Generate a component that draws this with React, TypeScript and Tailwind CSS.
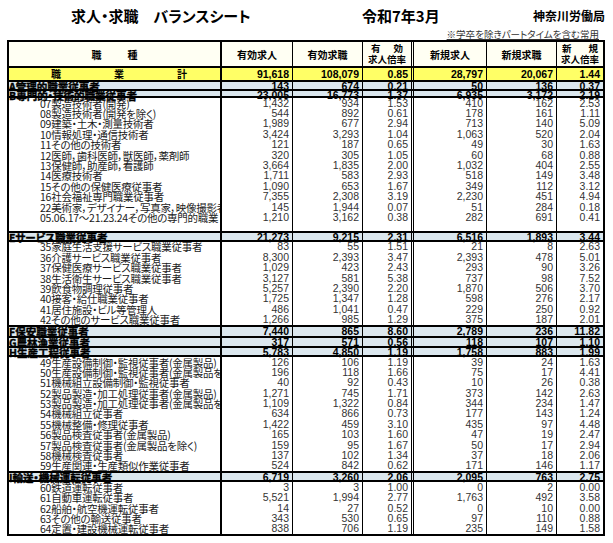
import React from 'react';

type Kind = 'sub' | 'cat' | 'gap';

interface Row {
  label: string;
  v: string[];
  kind: Kind;
  h?: string;
}

const COLS = 'grid grid-cols-[213px_71px_70px_51px_73px_70px_46px]';
const CELL = [
  'border-r-2 border-black',
  'border-r border-black',
  'border-r border-black',
  'border-r-[3px] border-double border-black',
  'border-r border-black',
  'border-r border-black',
  '',
];

const JP = "font-['Noto_Sans_CJK_JP',sans-serif] [font-feature-settings:'palt']";
const NUM = "font-['Liberation_Sans_Narrow','Liberation_Sans',sans-serif]";

const rows: Row[] = [
  { label: 'A管理的職業従事者', v: ['143', '674', '0.21', '50', '136', '0.37'], kind: 'cat', h: 'h-[9px]' },
  { label: 'B専門的・技術的職業従事者', v: ['23,005', '16,773', '1.37', '6,935', '3,172', '2.19'], kind: 'cat', h: 'h-[9px]' },
  { label: '07製造技術者(開発)', v: ['1,432', '934', '1.53', '410', '162', '2.53'], kind: 'sub' },
  { label: '08製造技術者(開発を除く)', v: ['544', '892', '0.61', '178', '161', '1.11'], kind: 'sub' },
  { label: '09建築・土木・測量技術者', v: ['1,989', '677', '2.94', '713', '140', '5.09'], kind: 'sub' },
  { label: '10情報処理・通信技術者', v: ['3,424', '3,293', '1.04', '1,063', '520', '2.04'], kind: 'sub' },
  { label: '11その他の技術者', v: ['121', '187', '0.65', '49', '30', '1.63'], kind: 'sub' },
  { label: '12医師，歯科医師，獣医師，薬剤師', v: ['320', '305', '1.05', '60', '68', '0.88'], kind: 'sub' },
  { label: '13保健師，助産師，看護師', v: ['3,664', '1,835', '2.00', '1,032', '404', '2.55'], kind: 'sub' },
  { label: '14医療技術者', v: ['1,711', '583', '2.93', '518', '149', '3.48'], kind: 'sub' },
  { label: '15その他の保健医療従事者', v: ['1,090', '653', '1.67', '349', '112', '3.12'], kind: 'sub' },
  { label: '16社会福祉専門職業従事者', v: ['7,355', '2,308', '3.19', '2,230', '451', '4.94'], kind: 'sub' },
  { label: '22美術家，デザイナー，写真家，映像撮影者', v: ['145', '1,944', '0.07', '51', '284', '0.18'], kind: 'sub' },
  { label: '05.06.17～21.23.24その他の専門的職業', v: ['1,210', '3,162', '0.38', '282', '691', '0.41'], kind: 'sub' },
  { label: '', v: ['', '', '', '', '', ''], kind: 'gap' },
  { label: 'Eサービス職業従事者', v: ['21,273', '9,215', '2.31', '6,516', '1,893', '3.44'], kind: 'cat', h: 'h-[11px]' },
  { label: '35家庭生活支援サービス職業従事者', v: ['83', '55', '1.51', '21', '8', '2.63'], kind: 'sub' },
  { label: '36介護サービス職業従事者', v: ['8,300', '2,393', '3.47', '2,393', '478', '5.01'], kind: 'sub' },
  { label: '37保健医療サービス職業従事者', v: ['1,029', '423', '2.43', '293', '90', '3.26'], kind: 'sub' },
  { label: '38生活衛生サービス職業従事者', v: ['3,127', '581', '5.38', '737', '98', '7.52'], kind: 'sub' },
  { label: '39飲食物調理従事者', v: ['5,257', '2,390', '2.20', '1,870', '506', '3.70'], kind: 'sub' },
  { label: '40接客・給仕職業従事者', v: ['1,725', '1,347', '1.28', '598', '276', '2.17'], kind: 'sub' },
  { label: '41居住施設・ビル等管理人', v: ['486', '1,041', '0.47', '229', '250', '0.92'], kind: 'sub' },
  { label: '42その他のサービス職業従事者', v: ['1,266', '985', '1.29', '375', '187', '2.01'], kind: 'sub' },
  { label: 'F保安職業従事者', v: ['7,440', '865', '8.60', '2,789', '236', '11.82'], kind: 'cat', h: 'h-[11px]' },
  { label: 'G農林漁業従事者', v: ['317', '571', '0.56', '118', '107', '1.10'], kind: 'cat', h: 'h-[10px]' },
  { label: 'H生産工程従事者', v: ['5,783', '4,850', '1.19', '1,758', '883', '1.99'], kind: 'cat', h: 'h-[11px]' },
  { label: '49生産設備制御・監視従事者(金属製品)', v: ['126', '106', '1.19', '39', '24', '1.63'], kind: 'sub' },
  { label: '50生産設備制御・監視従事者(金属製品を除く)', v: ['196', '118', '1.66', '75', '17', '4.41'], kind: 'sub' },
  { label: '51機械組立設備制御・監視従事者', v: ['40', '92', '0.43', '10', '26', '0.38'], kind: 'sub' },
  { label: '52製品製造・加工処理従事者(金属製品)', v: ['1,271', '745', '1.71', '373', '142', '2.63'], kind: 'sub' },
  { label: '53製品製造・加工処理従事者(金属製品を除く)', v: ['1,109', '1,322', '0.84', '344', '234', '1.47'], kind: 'sub' },
  { label: '54機械組立従事者', v: ['634', '866', '0.73', '177', '143', '1.24'], kind: 'sub' },
  { label: '55機械整備・修理従事者', v: ['1,422', '459', '3.10', '435', '97', '4.48'], kind: 'sub' },
  { label: '56製品検査従事者(金属製品)', v: ['165', '103', '1.60', '47', '19', '2.47'], kind: 'sub' },
  { label: '57製品検査従事者(金属製品を除く)', v: ['159', '95', '1.67', '50', '17', '2.94'], kind: 'sub' },
  { label: '58機械検査従事者', v: ['137', '102', '1.34', '37', '18', '2.06'], kind: 'sub' },
  { label: '59生産関連・生産類似作業従事者', v: ['524', '842', '0.62', '171', '146', '1.17'], kind: 'sub' },
  { label: 'I輸送・機械運転従事者', v: ['6,719', '3,260', '2.06', '2,095', '763', '2.75'], kind: 'cat', h: 'h-[11px]' },
  { label: '60鉄道運転従事者', v: ['3', '3', '1.00', '0', '2', '0.00'], kind: 'sub' },
  { label: '61自動車運転従事者', v: ['5,521', '1,994', '2.77', '1,763', '492', '3.58'], kind: 'sub' },
  { label: '62船舶・航空機運転従事者', v: ['14', '27', '0.52', '0', '10', '0.00'], kind: 'sub' },
  { label: '63その他の輸送従事者', v: ['343', '530', '0.65', '97', '110', '0.88'], kind: 'sub' },
  { label: '64定置・建設機械運転従事者', v: ['838', '706', '1.19', '235', '149', '1.58'], kind: 'sub' },
];

function TableRow({ row, nextKind }: { row: Row; nextKind?: Kind }) {
  if (row.kind === 'gap') {
    return (
      <div className={`${COLS} h-[8px] bg-white`}>
        {CELL.map((c, i) => (
          <div key={i} className={c} />
        ))}
      </div>
    );
  }
  const cat = row.kind === 'cat';
  const rowCls = cat
    ? `${row.h} bg-[#dbe7ee] border-t-2 border-black ${nextKind !== 'cat' ? 'border-b-2' : ''}`
    : 'h-[10.4px] bg-white';
  return (
    <div className={`${COLS} ${rowCls}`}>
      <div
        className={`${CELL[0]} ${JP} flex items-center overflow-x-clip whitespace-nowrap leading-[9px] ${
          cat
            ? 'text-[10.5px] font-bold text-black [-webkit-text-stroke:0.4px_#000]'
            : 'text-[10.5px] tracking-[-0.25px] text-[#1a1a1a] pl-[31px]'
        }`}
      >
        {row.label}
      </div>
      {row.v.map((n, i) => (
        <div
          key={i}
          className={`${CELL[i + 1]} ${NUM} flex items-center justify-end pr-[3px] leading-[9px] text-[10.5px] ${
            cat ? 'font-bold text-black' : 'text-[#333]'
          }`}
        >
          {n}
        </div>
      ))}
    </div>
  );
}

export default function App() {
  return (
    <div className="w-[613px] h-[543px] bg-white overflow-hidden">
      {/* title line */}
      <div className={`${JP} flex items-center h-[28px] pt-[4px] font-bold text-black`}>
        <div className="w-[362px] shrink-0 pl-[71px] text-[15px] whitespace-nowrap">求人・求職　バランスシート</div>
        <div className="w-[171px] shrink-0 text-[15px] whitespace-nowrap">令和7年3月</div>
        <div className="text-[12px] whitespace-nowrap">神奈川労働局</div>
      </div>
      <div className={`${JP} h-[12px] flex justify-end pr-[14px] text-[9.5px] leading-[12px] text-[#333] underline`}>
        ※学卒を除きパートタイムを含む常用
      </div>

      {/* balance sheet */}
      <div className="ml-[7px] w-[598px] border-2 border-black">
        {/* header */}
        <div className={`${COLS} h-[24px] bg-[#fffff3] ${JP} font-bold text-black`}>
          <div className={`${CELL[0]} flex items-center justify-center gap-[26px] text-[10px]`}>
            <span>職</span>
            <span>種</span>
          </div>
          <div className={`${CELL[1]} flex items-center justify-center text-[10px]`}>有効求人</div>
          <div className={`${CELL[2]} flex items-center justify-center text-[10px]`}>有効求職</div>
          <div className={`${CELL[3]} flex flex-col justify-center text-[9.5px] leading-[11px]`}>
            <div className="flex justify-between px-[8px]">
              <span>有</span>
              <span>効</span>
            </div>
            <div className="text-center">求人倍率</div>
          </div>
          <div className={`${CELL[4]} flex items-center justify-center text-[10px]`}>新規求人</div>
          <div className={`${CELL[5]} flex items-center justify-center text-[10px]`}>新規求職</div>
          <div className="flex flex-col justify-center text-[9.5px] leading-[11px]">
            <div className="flex justify-between px-[5px]">
              <span>新</span>
              <span>規</span>
            </div>
            <div className="text-center">求人倍率</div>
          </div>
        </div>

        {/* total */}
        <div className={`${COLS} h-[14px] bg-[#ffff66] border-t-2 border-black font-bold text-black`}>
          <div className={`${CELL[0]} ${JP} flex items-center justify-between pl-[42px] pr-[33px] text-[10px] leading-none`}>
            <span>職</span>
            <span>業</span>
            <span>計</span>
          </div>
          {['91,618', '108,079', '0.85', '28,797', '20,067', '1.44'].map((n, i) => (
            <div key={i} className={`${CELL[i + 1]} ${NUM} flex items-center justify-end pr-[3px] text-[10.5px] leading-none`}>
              {n}
            </div>
          ))}
        </div>

        {rows.map((r, i) => (
          <TableRow key={i} row={r} nextKind={rows[i + 1]?.kind} />
        ))}
      </div>
    </div>
  );
}
